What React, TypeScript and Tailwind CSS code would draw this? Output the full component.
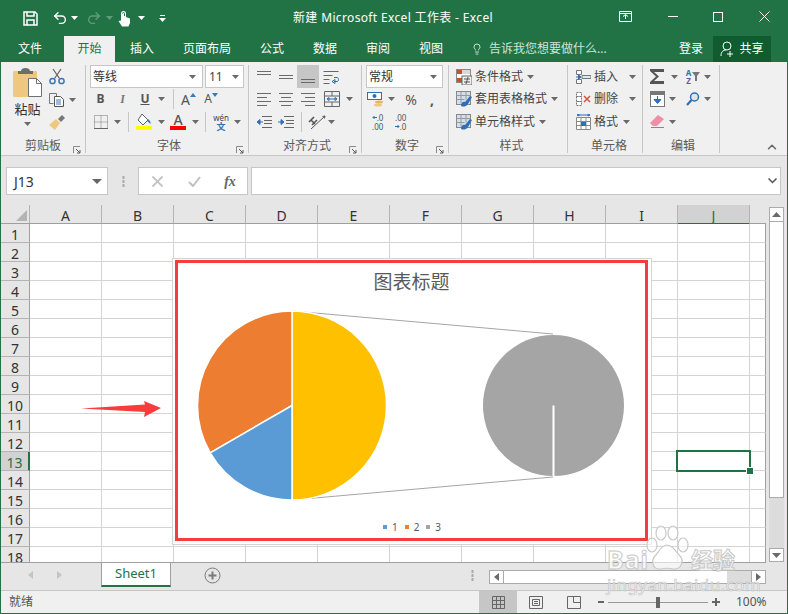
import React from "react";
import { Undo2, Redo2, Lightbulb, ChevronUp } from "lucide-react";

const Caret = ({ c = "#6a6a6a" }: { c?: string }) => (
  <svg width="7" height="4" viewBox="0 0 7 4" className="shrink-0 overflow-visible"><path d="M0 0h7L3.5 4z" fill={c} /></svg>
);

const Launcher = () => (
  <svg width="8" height="8" viewBox="0 0 8 8" className="absolute right-[4px] bottom-[-1px]">
    <path d="M.5 7V.5H7" fill="none" stroke="#8a8a8a" />
    <path d="M3 3l4 4M7 4v3H4" fill="none" stroke="#5a5a5a" />
  </svg>
);

const Slot = ({ className, children }: { className: string; children?: React.ReactNode }) => (
  <div className={"flex items-center justify-center shrink-0 h-full " + className}>{children}</div>
);

const Sep = ({ className }: { className: string }) => (
  <div className={"shrink-0 h-[20px] border-r border-[#c6c6c6] " + className} />
);

const Row = ({ className = "", children }: { className?: string; children: React.ReactNode }) => (
  <div className={"flex items-center " + className}>{children}</div>
);

const Group = ({ className, label, launch, children }: { className: string; label: string; launch?: boolean; children: React.ReactNode }) => (
  <div className={"flex flex-col shrink-0 h-[88px] border-r border-[#c6c6c6] " + className}>
    <div className="h-[68px]">{children}</div>
    <div className="relative h-[20px] flex items-center justify-center text-[12px] text-[#5a5a5a] pt-[5px]">
      {label}
      {launch && <Launcher />}
    </div>
  </div>
);

const AlignLines = ({ lines }: { lines: [number, number, number][] }) => (
  <svg width="16" height="16" viewBox="0 0 16 16">
    {lines.map(([y, a, b], i) => <path key={i} d={`M${a} ${y + 0.5}H${b}`} stroke="#6a6a6a" />)}
  </svg>
);

const Ribbon = () => (
  <div className="flex h-[94px] bg-[#f0f0f0] border-b border-[#c6c6c6] pt-[3px] text-[12px] text-[#444]">
    <Group className="w-[85px]" label="剪贴板" launch>
      <div className="flex h-full">
        <div className="w-[47px] flex flex-col items-center pt-[2px] pl-[6px]">
          <svg width="30" height="31" viewBox="0 0 30 31" className="shrink-0">
            <rect x="0" y="4" width="24" height="26" rx="1" fill="#efc77e" />
            <path d="M8 4c0-4 9-4 9 0h3v3H5V4z" fill="#6d6d6d" />
            <path d="M15.5 11.5h8l5 5v13h-13z" fill="#fff" stroke="#707070" />
            <path d="M23.5 11.5v5h5" fill="none" stroke="#707070" />
          </svg>
          <div className="text-[13px] leading-[16px] mt-[3px] text-[#333]">粘贴</div>
          <div className="mt-[5px]"><Caret /></div>
        </div>
        <div className="flex flex-col pt-[1px]">
          <div className="flex items-center h-[22px] pl-[1px]">
            <svg width="16" height="17" viewBox="0 0 16 17">
              <path d="M5.5 10.5L12 1M10.5 10.5L4 1" stroke="#666" strokeWidth="1.3" fill="none" />
              <circle cx="3.5" cy="13" r="2.6" fill="none" stroke="#3a78b8" strokeWidth="1.5" />
              <circle cx="12.5" cy="13" r="2.6" fill="none" stroke="#3a78b8" strokeWidth="1.5" />
            </svg>
          </div>
          <div className="flex items-center h-[25px] pl-[1px] gap-[4px]">
            <svg width="16" height="14" viewBox="0 0 16 14">
              <path d="M.5.5h7v3M.5.5v10h4" fill="none" stroke="#777" />
              <path d="M5.5 3.5h6l3 3v7h-9z" fill="#fff" stroke="#555" />
              <path d="M7 7h5M7 9h5M7 11h5" stroke="#3a78b8" />
            </svg>
            <Caret />
          </div>
          <div className="flex items-center h-[22px] pl-[1px]">
            <svg width="17" height="15" viewBox="0 0 17 15">
              <path d="M0 10l7-6 4 4-5 7c-2-2-4-3-6-5z" fill="#efc77e" />
              <path d="M9 4l4-4 3 3-4 4z" fill="#777" />
            </svg>
          </div>
        </div>
      </div>
    </Group>

    <Group className="w-[163px] pl-[4px]" label="字体" launch>
      <Row className="h-[23px] gap-[2px] items-start">
        <div className="w-[113px] h-[23px] bg-white border border-[#c6c6c6] flex items-center justify-between pl-[2px] pr-[6px] text-[12px] text-[#333]">等线<Caret /></div>
        <div className="w-[39px] h-[23px] bg-white border border-[#c6c6c6] flex items-center justify-between pl-[3px] pr-[4px] text-[12px] text-[#444]">11<Caret /></div>
      </Row>
      <Row className="h-[22px]">
        <Slot className="w-[21px] font-bold text-[12px] text-[#555]">B</Slot>
        <Slot className="w-[23px] italic font-bold text-[12px] text-[#777] font-['Liberation_Serif',serif]">I</Slot>
        <Slot className="w-[22px] font-bold text-[12px] text-[#555] underline">U</Slot>
        <Slot className="w-[10px]"><Caret /></Slot>
        <Sep className="w-[8px]" />
        <Slot className="w-[29px] text-[14px] text-[#555]">A<svg width="6" height="4" viewBox="0 0 6 4" className="mb-[9px]"><path d="M0 4h6L3 0z" fill="#3a78b8" /></svg></Slot>
        <Slot className="w-[16px] text-[12px] text-[#555]">A<svg width="6" height="4" viewBox="0 0 6 4" className="mb-[9px]"><path d="M0 0h6L3 4z" fill="#3a78b8" /></svg></Slot>
      </Row>
      <Row className="h-[23px]">
        <Slot className="w-[22px]">
          <svg width="14" height="14" viewBox="0 0 14 14">
            <path d="M.5.5h13v13H.5zM7 .5v13M.5 7h13" fill="none" stroke="#777" strokeDasharray="1 1" />
            <path d="M0 13.5h14" stroke="#666" />
          </svg>
        </Slot>
        <Slot className="w-[10px]"><Caret /></Slot>
        <Sep className="w-[7px]" />
        <Slot className="w-[30px]">
          <svg width="16" height="17" viewBox="0 0 16 17">
            <path d="M6 1l6 6-5 5-5-5z" fill="#fff" stroke="#666" />
            <path d="M12 6c2 2 3 3 2.5 5L11 8z" fill="#3a78b8" />
            <rect y="13" width="16" height="4" fill="#ffff00" />
          </svg>
        </Slot>
        <Slot className="w-[4px]"><Caret /></Slot>
        <Slot className="w-[30px]">
          <div className="relative flex flex-col items-center text-[14px] leading-[13px] font-medium text-[#555]">A<div className="w-[16px] h-[4px] bg-[#ff0000]" /></div>
        </Slot>
        <Slot className="w-[4px]"><Caret /></Slot>
        <Sep className="w-[9px]" />
        <Slot className="w-[30px]">
          <div className="flex flex-col items-center text-[8px] leading-[9px] text-[#444]">wén<span className="text-[9px] text-[#2f6fb5] font-bold">文</span></div>
        </Slot>
        <Slot className="w-[2px]"><Caret /></Slot>
      </Row>
    </Group>

    <Group className="w-[113px] pl-[4px]" label="对齐方式" launch>
      <Row className="h-[23px]">
        <Slot className="w-[22px]"><AlignLines lines={[[2, 1, 15], [5, 1, 15]]} /></Slot>
        <Slot className="w-[22px]"><AlignLines lines={[[6, 1, 15], [9, 1, 15]]} /></Slot>
        <Slot className="w-[22px] bg-[#c6c6c6]"><AlignLines lines={[[10, 1, 15], [13, 1, 15]]} /></Slot>
        <Slot className="w-[24px]">
          <svg width="16" height="16" viewBox="0 0 16 16">
            <path d="M.5 2.5h15M.5 6.5h9M.5 10.5h6M.5 14.5h6" stroke="#666" />
            <path d="M11 12.5h3c2 0 2-4 0-4h-3M9 12.5l3-2v4z" fill="none" stroke="#2f6fb5" />
          </svg>
        </Slot>
      </Row>
      <Row className="h-[22px]">
        <Slot className="w-[22px]"><AlignLines lines={[[2, 1, 15], [6, 1, 11], [10, 1, 15], [14, 1, 11]]} /></Slot>
        <Slot className="w-[22px]"><AlignLines lines={[[2, 1, 15], [6, 3, 13], [10, 1, 15], [14, 3, 13]]} /></Slot>
        <Slot className="w-[22px]"><AlignLines lines={[[2, 1, 15], [6, 5, 15], [10, 1, 15], [14, 5, 15]]} /></Slot>
        <Slot className="w-[26px]">
          <svg width="16" height="16" viewBox="0 0 16 16">
            <path d="M.5.5h15v15H.5zM.5 5h15M.5 11h15M8 .5V5M8 11v4.5" fill="none" stroke="#666" />
            <path d="M3 8h10M3 8l2-1.5v3zM13 8l-2-1.5v3z" fill="none" stroke="#2f6fb5" />
          </svg>
        </Slot>
        <Slot className="w-[8px]"><Caret /></Slot>
      </Row>
      <Row className="h-[23px]">
        <Slot className="w-[22px]">
          <svg width="16" height="14" viewBox="0 0 16 14">
            <path d="M6 1.5h10M6 12.5h10M8 5.5h8M8 8.5h8" stroke="#666" />
            <path d="M1 7h6M1 7l3-2.5v5z" fill="#2f6fb5" stroke="#2f6fb5" />
          </svg>
        </Slot>
        <Slot className="w-[22px]">
          <svg width="16" height="14" viewBox="0 0 16 14">
            <path d="M6 1.5h10M6 12.5h10M8 5.5h8M8 8.5h8" stroke="#666" />
            <path d="M0 7h6M6 7L3 4.5v5z" fill="#2f6fb5" stroke="#2f6fb5" />
          </svg>
        </Slot>
        <Sep className="w-[5px]" />
        <Slot className="w-[24px] ml-[3px]">
          <svg width="18" height="17" viewBox="0 0 18 17">
            <path d="M3 16L17 3" stroke="#555" />
            <path d="M14.5 3.5l2.5-.5-.5 2.5" fill="none" stroke="#555" />
            <path d="M1 9l5-5M4 12l5-5M3 7l4 4" stroke="#555" strokeWidth="1.6" fill="none" />
          </svg>
        </Slot>
        <Slot className="w-[4px]"><Caret /></Slot>
      </Row>
    </Group>

    <Group className="w-[87px] pl-[4px]" label="数字" launch>
      <Row className="h-[23px] items-start">
        <div className="w-[77px] h-[23px] bg-white border border-[#c6c6c6] flex items-center justify-between pl-[2px] pr-[5px] text-[12px] text-[#333]">常规<Caret /></div>
      </Row>
      <Row className="h-[22px]">
        <Slot className="w-[18px]">
          <svg width="17" height="17" viewBox="0 0 17 17">
            <rect x=".5" y="1.5" width="14" height="7" fill="#fff" stroke="#2f6fb5" />
            <circle cx="7.5" cy="5" r="2" fill="#2f6fb5" />
            <ellipse cx="12" cy="11" rx="4" ry="1.5" fill="#e8b45a" />
            <ellipse cx="11" cy="14" rx="4" ry="1.5" fill="#efc77e" />
          </svg>
        </Slot>
        <Slot className="w-[14px]"><Caret /></Slot>
        <Slot className="w-[26px] text-[14px] text-[#555]">%</Slot>
        <Slot className="w-[16px] text-[14px] font-bold text-[#555]">,</Slot>
      </Row>
      <Row className="h-[23px]">
        <Slot className="w-[23px]">
          <div className="flex flex-col items-end">
            <div className="flex items-center h-[9px] text-[8px] leading-[9px] text-[#555]">
              <svg width="5" height="5" viewBox="0 0 5 5"><path d="M5 2.500H1M2.500 1L1 2.500 2.500 4" fill="none" stroke="#2f6fb5" /></svg>.0
            </div>
            <div className="h-[9px] text-[8px] leading-[9px] text-[#555]">.00</div>
          </div>
        </Slot>
        <Slot className="w-[23px]">
          <div className="flex flex-col items-end">
            <div className="h-[9px] text-[8px] leading-[9px] text-[#555]">.00</div>
            <div className="flex items-center h-[9px] text-[8px] leading-[9px] text-[#555]">
              <svg width="5" height="5" viewBox="0 0 5 5"><path d="M0 2.500H4M2.500 1L4 2.500 2.500 4" fill="none" stroke="#2f6fb5" /></svg>.0
            </div>
          </div>
        </Slot>
      </Row>
    </Group>

    <Group className="w-[119px] pl-[7px]" label="样式">
      {[
        ["条件格式", "h-[23px]", 0],
        ["套用表格格式", "h-[22px]", 1],
        ["单元格样式", "h-[23px]", 1],
      ].map(([t, h, kind]) => (
        <Row key={t as string} className={(h as string) + " gap-[3px]"}>
          <svg width="16" height="16" viewBox="0 0 16 16" className="shrink-0">
            {kind === 0 ? (
              <>
                <rect x=".5" y=".5" width="14" height="13" fill="#fff" stroke="#888" />
                <rect x="1" y="1" width="5" height="4" fill="#c8502f" />
                <rect x="6" y="1" width="8" height="4" fill="#d8d8d8" />
                <rect x="1" y="9" width="5" height="4" fill="#c8502f" />
                <rect x="6" y="7" width="10" height="9" fill="#f0f0f0" stroke="#666" />
                <path d="M8 10h6M8 13h6M12 8l-2 7" stroke="#555" />
              </>
            ) : (
              <>
                <rect x=".5" y=".5" width="14" height="13" fill="#d4dfee" stroke="#888" />
                <path d="M.5 4.5h14M.5 8.5h8M5 .5v12M10 .5v8" stroke="#999" />
                <path d="M5 15c0-3 2-5 4-4l5-6 2 1-4 7c-2 3-5 3-7 2z" fill="#2f6fb5" />
              </>
            )}
          </svg>
          <span className="text-[#444]">{t as string}</span>
          <span className="ml-[1px] flex"><Caret /></span>
        </Row>
      ))}
    </Group>

    <Group className="w-[75px] pl-[8px]" label="单元格">
      {[
        ["插入", "h-[23px]", "ml-[8px]", 0],
        ["删除", "h-[22px]", "ml-[8px]", 1],
        ["格式", "h-[23px]", "ml-[2px]", 2],
      ].map(([t, h, m, kind]) => (
        <Row key={t as string} className={(h as string) + " gap-[3px]"}>
          <svg width="15" height="16" viewBox="0 0 15 16" className="shrink-0">
            {kind === 0 && (
              <>
                <path d="M.5 1.5h5v4h-5zM.5 10.5h5v4h-5z" fill="#fff" stroke="#777" />
                <path d="M6 6.5h9v3H6z" fill="#dce6f2" stroke="#777" />
                <path d="M0 8h5M5 8L2.5 6v4z" fill="#2f6fb5" stroke="#2f6fb5" />
              </>
            )}
            {kind === 1 && (
              <>
                <path d="M.5 1.5h5v4h-5zM.5 10.5h5v4h-5zM.5 5.500h5v5h-5z" fill="#fff" stroke="#777" strokeDasharray="2 1" />
                <path d="M8 5l6 6M14 5l-6 6" stroke="#d0563a" strokeWidth="1.5" />
              </>
            )}
            {kind === 2 && (
              <>
                <path d="M.5 3.5h14v12H.5zM.5 7.500h14M.5 11.500h14M5 3.500v12M10 3.500v12" fill="#fff" stroke="#888" />
                <rect x="5" y="8" width="5" height="4" fill="#2f6fb5" />
                <path d="M1 1h13M1 1l2-1v2zM14 1l-2-1v2z" stroke="#2f6fb5" fill="none" />
              </>
            )}
          </svg>
          <span className="text-[#444]">{t as string}</span>
          <span className={"flex " + (m as string)}><Caret /></span>
        </Row>
      ))}
    </Group>

    <Group className="w-[77px] pl-[4px]" label="编辑">
      <Row className="h-[23px]">
        <Slot className="w-[20px]">
          <svg width="16" height="15" viewBox="0 0 16 15"><path d="M1 0h14v3H5l5 4.500-5 4.500h10v3H1v-2l6-5.500-6-5.500z" fill="#555" /></svg>
        </Slot>
        <Slot className="w-[15px]"><Caret /></Slot>
        <Slot className="w-[22px]">
          <div className="flex items-center">
            <div className="flex flex-col items-center text-[8px] leading-[8px] font-bold"><span className="text-[#2f6fb5]">A</span><span className="text-[#7a4ea0]">Z</span></div>
            <svg width="8" height="9" viewBox="0 0 8 9" className="ml-[1px]"><path d="M0 0h8L5 4v5H3V4z" fill="#777" /></svg>
          </div>
        </Slot>
        <Slot className="w-[6px]"><Caret /></Slot>
      </Row>
      <Row className="h-[22px]">
        <Slot className="w-[20px]">
          <svg width="15" height="16" viewBox="0 0 15 16">
            <rect x=".5" y=".5" width="14" height="15" fill="#fff" stroke="#777" />
            <rect x="1" y="1" width="13" height="3" fill="#777" />
            <path d="M7.500 5v5M4 8.500h7l-3.500 4z" fill="#2f6fb5" stroke="#2f6fb5" />
          </svg>
        </Slot>
        <Slot className="w-[11px]"><Caret /></Slot>
        <Slot className="w-[4px]" />
        <Slot className="w-[22px]">
          <svg width="14" height="14" viewBox="0 0 14 14">
            <circle cx="8.500" cy="5" r="4" fill="#dce6f2" stroke="#2f6fb5" strokeWidth="1.5" />
            <path d="M5.500 8L1 13" stroke="#2f6fb5" strokeWidth="2.200" />
          </svg>
        </Slot>
        <Slot className="w-[6px]"><Caret /></Slot>
      </Row>
      <Row className="h-[23px]">
        <Slot className="w-[20px]">
          <svg width="15" height="13" viewBox="0 0 15 13">
            <path d="M0 8l8-8 6 4-7 7H3z" fill="#ee8fa5" />
            <path d="M1 12.500h13" stroke="#888" />
          </svg>
        </Slot>
        <Slot className="w-[11px]"><Caret /></Slot>
      </Row>
    </Group>

    <div className="flex-1 flex items-end justify-end pr-[8px] pb-[1px]">
      <ChevronUp size={14} strokeWidth={2.500} color="#666" />
    </div>
  </div>
);

const TitleBar = () => (
  <div className="flex items-center h-[36px] pl-[18px] text-white">
    <Slot className="w-[22px]">
      <svg width="15" height="15" viewBox="0 0 15 15">
        <path d="M1 1h11l2 2v11H1z" fill="none" stroke="#fff" strokeWidth="1.500" />
        <path d="M4 1v4h7V1M4 14V9h7v5" fill="none" stroke="#fff" strokeWidth="1.500" />
      </svg>
    </Slot>
    <Slot className="w-[20px] ml-[9px]"><Undo2 size={16} strokeWidth={2} /></Slot>
    <Slot className="w-[8px]"><Caret c="#fff" /></Slot>
    <Slot className="w-[20px] ml-[6px]"><Redo2 size={16} strokeWidth={2} color="#5f9c7c" /></Slot>
    <Slot className="w-[8px] ml-[1px]"><Caret c="#5f9c7c" /></Slot>
    <Slot className="w-[20px] ml-[1px]">
      <svg width="13" height="17" viewBox="0 0 13 17">
        <path d="M3 3.500a2.500 2.500 0 015 0V7l4 1.500V13l-1.500 3.500H4L.5 11l2.500-.5z" fill="#fff" />
        <path d="M4.500 3.500a1 1 0 012 0V6" fill="none" stroke="#217346" />
      </svg>
    </Slot>
    <Slot className="w-[8px] ml-[3px]"><Caret c="#fff" /></Slot>
    <Slot className="w-[8px] ml-[13px]">
      <svg width="7" height="7" viewBox="0 0 7 7"><path d="M1 .5h5" stroke="#fff" /><path d="M0 3h7L3.500 7z" fill="#fff" /></svg>
    </Slot>
    <div className="ml-[127px] w-[200px] text-[12px] tracking-[0.35px] whitespace-nowrap">新建 Microsoft Excel 工作表 - Excel</div>
    <Slot className="w-[20px] ml-[122px] pb-[3px]">
      <svg width="13" height="11" viewBox="0 0 13 11"><path d="M.5.5h12v10H.5zM.5 2.500h12M4 5.500l2.500-2 2.500 2M6.500 4v4" fill="none" stroke="#fff" /></svg>
    </Slot>
    <Slot className="w-[20px] ml-[28px] pb-[3px]"><div className="w-[10px] h-[1px] bg-white" /></Slot>
    <Slot className="w-[20px] ml-[25px] pb-[3px]"><div className="w-[10px] h-[10px] border border-white" /></Slot>
    <Slot className="w-[20px] ml-[26px] pb-[3px]">
      <svg width="11" height="11" viewBox="0 0 11 11"><path d="M.5.5l10 10M10.500.5l-10 10" stroke="#fff" /></svg>
    </Slot>
  </div>
);

const TabBar = () => (
  <div className="flex h-[26px] text-[12px] text-white items-stretch">
    <Slot className="w-[58px]">文件</Slot>
    <Slot className="w-[51px] ml-[5px] bg-[#f0f0f0] text-[#217346]">开始</Slot>
    <Slot className="w-[54px]">插入</Slot>
    <Slot className="w-[76px]">页面布局</Slot>
    <Slot className="w-[54px]">公式</Slot>
    <Slot className="w-[52px]">数据</Slot>
    <Slot className="w-[54px]">审阅</Slot>
    <Slot className="w-[52px]">视图</Slot>
    <Slot className="w-[12px] ml-[14px]"><Lightbulb size={14} strokeWidth={1.500} /></Slot>
    <Slot className="w-[120px] ml-[6px] justify-start text-[#cfe3d6] whitespace-nowrap">告诉我您想要做什么...</Slot>
    <Slot className="w-[24px] ml-[70px]">登录</Slot>
    <Slot className="w-[58px] ml-[10px] bg-[#115c2f] gap-[3px]">
      <svg width="16" height="16" viewBox="0 0 16 16">
        <circle cx="7" cy="5" r="4" fill="none" stroke="#fff" />
        <path d="M1 15c0-4 2-6 5-6M10 10v6M7 13h6" fill="none" stroke="#fff" />
      </svg>
      共享
    </Slot>
  </div>
);

const FormulaBar = () => (
  <div className="flex h-[49px] bg-[#e6e6e6] pt-[11px] pl-[5px] pr-[6px] items-start">
    <div className="w-[102px] h-[28px] bg-white border border-[#c6c6c6] flex items-center justify-between pl-[7px] pr-[5px] text-[14px] text-[#333]">
      J13<svg width="10" height="5" viewBox="0 0 10 5"><path d="M0 0h10L5 5z" fill="#666" /></svg>
    </div>
    <div className="w-[30px] h-[28px] flex items-center justify-center">
      <svg width="3" height="11" viewBox="0 0 3 11"><path d="M1.500 0v3M1.500 4v3M1.500 8v3" stroke="#aaa" strokeWidth="2" /></svg>
    </div>
    <div className="w-[110px] h-[28px] bg-white border border-[#c6c6c6] flex items-center text-[#b4b4b4]">
      <Slot className="w-[37px]">
        <svg width="11" height="11" viewBox="0 0 11 11"><path d="M.5.5l10 10M10.500.5l-10 10" stroke="#c0c0c0" strokeWidth="1.800" /></svg>
      </Slot>
      <Slot className="w-[36px]">
        <svg width="13" height="11" viewBox="0 0 13 11"><path d="M1 6l4 4 7-9" fill="none" stroke="#c0c0c0" strokeWidth="2" /></svg>
      </Slot>
      <Slot className="w-[36px] font-['Liberation_Serif',serif] italic font-bold text-[14px] text-[#666]">fx</Slot>
    </div>
    <div className="ml-[3px] flex-1 h-[28px] bg-white border border-[#c6c6c6] flex items-center justify-end pr-[3px]">
      <svg width="9" height="6" viewBox="0 0 9 6"><path d="M.5.500l4 4 4-4" fill="none" stroke="#555" strokeWidth="1.500" /></svg>
    </div>
  </div>
);

const cols = ["A", "B", "C", "D", "E", "F", "G", "H", "I", "J"];
const rows = Array.from({ length: 18 }, (_, i) => i + 1);

const Sheet = () => (
  <div className="flex h-[358px]">
    <div className="w-[765px] flex flex-col overflow-hidden">
      <div className="flex h-[19px] shrink-0 bg-[#e6e6e6] border-b border-[#9f9f9f]">
        <div className="w-[29px] border-r border-[#b4b4b4] flex items-end justify-end pr-[2px] pb-[2px]">
          <svg width="11" height="11" viewBox="0 0 11 11"><path d="M11 0v11H0z" fill="#b4b4b4" /></svg>
        </div>
        {cols.map((c) =>
          c === "J" ? (
            <div key={c} className="w-[72px] -mb-px h-[20px] bg-[#d2d2d2] border-b-2 border-[#217346] border-r border-r-[#b4b4b4] flex items-center justify-center pt-[3px] text-[14px] leading-none text-[#217346]">{c}</div>
          ) : (
            <div key={c} className="w-[72px] border-r border-[#b4b4b4] flex items-center justify-center pt-[3px] text-[14px] leading-none text-[#333]">{c}</div>
          )
        )}
        <div className="w-[16px]" />
      </div>
      <div className="h-[339px] overflow-hidden border-b border-[#9f9f9f]">
        {rows.map((r) => (
          <div key={r} className="flex h-[19px]">
            <div className={r === 13
              ? "w-[29px] shrink-0 bg-[#d2d2d2] border-b border-[#b4b4b4] border-r-2 border-r-[#217346] flex items-center justify-center pt-[4px] text-[14px] leading-none text-[#217346]"
              : "w-[29px] shrink-0 bg-[#e6e6e6] border-b border-[#b4b4b4] border-r border-r-[#9f9f9f] flex items-center justify-center pt-[4px] text-[14px] leading-none text-[#333]"}>{r}</div>
            {cols.map((c) => (
              <div key={c} className="w-[72px] shrink-0 border-r border-b border-[#d4d4d4] bg-white" />
            ))}
            <div className="w-[16px] shrink-0 border-b border-b-[#d4d4d4] border-r border-r-[#9f9f9f] bg-white" />
          </div>
        ))}
      </div>
    </div>
    <div className="w-[21px] bg-[#e6e6e6] pl-[3px] pt-[2px] flex flex-col">
      <div className="w-[15px] h-[15px] bg-white border border-[#ababab] flex items-center justify-center">
        <svg width="9" height="5" viewBox="0 0 9 5"><path d="M0 5h9L4.500 0z" fill="#6a6a6a" /></svg>
      </div>
      <div className="w-[15px] h-[276px] bg-white border-x border-b border-[#ababab]" />
      <div className="w-[15px] flex-1 bg-[#dcdcdc]" />
      <div className="w-[15px] h-[14px] mb-[1px] bg-white border border-[#ababab] flex items-center justify-center">
        <svg width="9" height="5" viewBox="0 0 9 5"><path d="M0 0h9L4.500 5z" fill="#6a6a6a" /></svg>
      </div>
    </div>
  </div>
);

const SheetTabs = () => (
  <div className="flex h-[28px] bg-[#e6e6e6] border-b border-[#c6c6c6]">
    <div className="w-[100px] flex items-center pb-[4px]">
      <Slot className="w-[20px] ml-[19px]"><svg width="5" height="8" viewBox="0 0 5 8"><path d="M5 0v8L0 4z" fill="#c4c4c4" /></svg></Slot>
      <Slot className="w-[20px] ml-[9px]"><svg width="5" height="8" viewBox="0 0 5 8"><path d="M0 0v8l5-4z" fill="#c4c4c4" /></svg></Slot>
    </div>
    <div className="w-[70px] h-[24px] bg-white border-x border-[#9f9f9f] border-b-2 border-b-[#217346] flex items-center justify-center text-[13px] text-[#217346]">Sheet1</div>
    <div className="w-[29px]" />
    <Slot className="w-[24px] pb-[2px]">
      <svg width="17" height="17" viewBox="0 0 17 17">
        <circle cx="8.500" cy="8.500" r="7.500" fill="none" stroke="#7a7a7a" />
        <path d="M8.500 4.500v8M4.500 8.500h8" stroke="#7a7a7a" strokeWidth="2" />
      </svg>
    </Slot>
    <div className="flex-1" />
    <Slot className="w-[34px] pb-[2px]">
      <svg width="3" height="11" viewBox="0 0 3 11"><path d="M1.500 0v3M1.500 4v3M1.500 8v3" stroke="#aaa" strokeWidth="2" /></svg>
    </Slot>
    <div className="w-[277px] mr-[21px] h-[14px] mt-[7px] flex border border-[#ababab] bg-[#dcdcdc]">
      <div className="w-[14px] bg-white border-r border-[#ababab] flex items-center justify-center"><svg width="5" height="8" viewBox="0 0 5 8"><path d="M5 0v8L0 4z" fill="#6a6a6a" /></svg></div>
      <div className="w-[223px] bg-white" />
      <div className="flex-1" />
      <div className="w-[14px] bg-white border-l border-[#ababab] flex items-center justify-center"><svg width="5" height="8" viewBox="0 0 5 8"><path d="M0 0v8l5-4z" fill="#6a6a6a" /></svg></div>
    </div>
  </div>
);

const StatusBar = () => (
  <div className="flex flex-1 bg-[#f0f0f0] items-stretch text-[12px] text-[#555]">
    <div className="w-[478px] pl-[8px] flex items-center">就绪</div>
    <Slot className="w-[38px] bg-[#c6c6c6]">
      <svg width="13" height="13" viewBox="0 0 13 13"><path d="M.5.5h12v12H.5zM4.500.5v12M8.500.5v12M.5 4.500h12M.5 8.500h12" fill="none" stroke="#666" /></svg>
    </Slot>
    <Slot className="w-[38px]">
      <svg width="14" height="13" viewBox="0 0 14 13"><path d="M.5.5h13v12H.5zM3.500 3.500h7v6h-7zM5 5.500h4M5 7.500h4" fill="none" stroke="#666" /></svg>
    </Slot>
    <Slot className="w-[38px]">
      <svg width="14" height="13" viewBox="0 0 14 13"><path d="M.5.5h13v12H.5zM6.500.5v6h7" fill="none" stroke="#666" /></svg>
    </Slot>
    <Slot className="w-[15px]"><div className="w-[6px] h-[2px] bg-[#666]" /></Slot>
    <div className="relative w-[100px] flex items-center justify-center">
      <div className="absolute inset-x-0 top-1/2 h-px bg-[#999]" />
      <div className="relative w-[4px] h-[11px] bg-[#666]" />
    </div>
    <Slot className="w-[15px]">
      <svg width="8" height="8" viewBox="0 0 8 8"><path d="M4 0v8M0 4h8" stroke="#666" strokeWidth="2" /></svg>
    </Slot>
    <div className="pl-[13px] flex items-center text-[12px]">100%</div>
  </div>
);

const Chart = () => (
  <div className="absolute left-[171px] top-[258px] w-[480px] h-[287px] bg-white border border-[#d4d4d4] pt-[1px] pl-[2px]">
    <div className="w-[473px] h-[281px] border-[3px] border-[#f63c3c] flex flex-col">
      <div className="h-[38px] shrink-0 flex items-center justify-center text-[19px] leading-none text-[#595959]">图表标题</div>
      <svg width="466" height="214" viewBox="178 301 466 214" className="shrink-0">
        <path d="M292 311L553 334M292 500L553 477" stroke="#a5a5a5" fill="none" />
        <path d="M292 311A94.500 94.500 0 0 1 292 500Z" fill="#ffc000" stroke="#fff" strokeWidth="1.500" />
        <path d="M292 405.500L210.200 452.800A94.500 94.500 0 0 1 292 311Z" fill="#ed7d31" stroke="#fff" strokeWidth="1.500" />
        <path d="M292 405.500V500A94.500 94.500 0 0 1 210.200 452.800Z" fill="#5b9bd5" stroke="#fff" strokeWidth="1.500" />
        <circle cx="553.500" cy="405.500" r="70.500" fill="#a5a5a5" />
        <path d="M553.500 405.500V476" stroke="#fff" strokeWidth="2" />
      </svg>
      <div className="flex-1 flex items-center justify-center text-[10px] leading-none text-[#595959] pl-[1px]">
        <span className="w-[4px] h-[4px] bg-[#5b9bd5]" /><span className="ml-[5px]">1</span>
        <span className="w-[4px] h-[4px] bg-[#ed7d31] ml-[7px]" /><span className="ml-[5px]">2</span>
        <span className="w-[4px] h-[4px] bg-[#a5a5a5] ml-[7px]" /><span className="ml-[5px]">3</span>
      </div>
    </div>
  </div>
);

const Watermark = () => (
  <div className="absolute left-[604px] top-[526px] w-[145px] h-[70px] flex flex-col">
    <div className="flex items-end h-[47px] shrink-0">
      <span className="text-[25px] leading-[28px] font-bold text-white/75 [-webkit-text-stroke:1px_#c8c8c8] tracking-[1px] ml-[2px]">Bai</span>
      <svg width="44" height="48" viewBox="0 0 44 48" className="shrink-0 -ml-[4px]">
        <g fill="#ffffff" fillOpacity="0.6" stroke="#c8c8c8" strokeWidth="1.200">
          <ellipse cx="7" cy="20" rx="5" ry="7" />
          <ellipse cx="16" cy="8" rx="5" ry="7" />
          <ellipse cx="28" cy="8" rx="5" ry="7" />
          <ellipse cx="38" cy="20" rx="5" ry="7" />
          <path d="M22 20c6 0 9 7 13 11s2 14-7 13c-4-1-8-1-12 0-9 1-10-9-6-13s6-11 12-11z" />
        </g>
      </svg>
      <span className="text-[22px] leading-[28px] font-bold text-white/75 [-webkit-text-stroke:1px_#c8c8c8] ml-[2px] whitespace-nowrap">经验</span>
    </div>
    <div className="mt-[2px] ml-[2px] h-[20px] text-[17px] leading-[20px] tracking-[0.4px] text-white/75 [-webkit-text-stroke:0.6px_#bdbdbd] whitespace-nowrap">jingyan.baidu.com</div>
  </div>
);

export default function App() {
  return (
    <div className="relative w-[788px] h-[614px] overflow-hidden bg-[#217346] border-x border-b border-[#217346] flex flex-col font-['Noto_Sans','Noto_Sans_CJK_SC',sans-serif]">
      <TitleBar />
      <TabBar />
      <Ribbon />
      <FormulaBar />
      <Sheet />
      <SheetTabs />
      <StatusBar />
      <Chart />
      <svg width="82" height="18" viewBox="80 400 82 18" className="absolute left-[79px] top-[400px]">
        <path d="M81 408.500L145 404.500 144 401 161 408 144 417 145 412z" fill="#f63c3c" />
      </svg>
      <div className="absolute left-[675px] top-[450px] w-[75px] h-[22px] border-2 border-[#217346]" />
      <div className="absolute left-[745px] top-[467px] w-[6px] h-[6px] bg-[#217346] border border-white box-content" />
      <Watermark />
    </div>
  );
}
